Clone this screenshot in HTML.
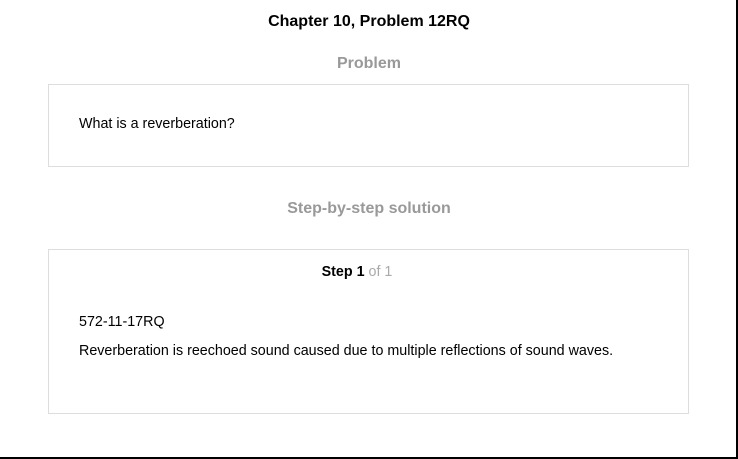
<!DOCTYPE html>
<html><head><style>
body{margin:0;width:738px;height:459px;position:relative;background:#fff;font-family:"Liberation Sans",sans-serif;overflow:hidden}
.frame{position:absolute;left:0;top:0;width:736px;height:457px;border-right:2px solid #000;border-bottom:2px solid #000}
.t{position:absolute;left:0;width:738px;text-align:center;font-weight:bold;font-size:16px}
.box{position:absolute;left:48px;width:639px;border:1px solid #ddd}
.p{position:absolute;left:79px;font-size:14.3px;color:#000}
</style></head><body>
<div class="frame"></div>
<div class="t" style="top:13px;color:#000">Chapter 10, Problem 12RQ</div>
<div class="t" style="top:55px;color:#999">Problem</div>
<div class="box" style="top:84px;height:81px"></div>
<div class="p" style="top:116px">What is a reverberation?</div>
<div class="t" style="top:200px;color:#999">Step-by-step solution</div>
<div class="box" style="top:249px;height:163px"></div>
<div class="t" style="top:264px;left:-12px;font-size:14.3px"><span>Step 1</span> <span style="font-weight:normal;color:#aaa">of 1</span></div>
<div class="p" style="top:314px">572-11-17RQ</div>
<div class="p" style="top:343px">Reverberation is reechoed sound caused due to multiple reflections of sound waves.</div>
</body></html>
